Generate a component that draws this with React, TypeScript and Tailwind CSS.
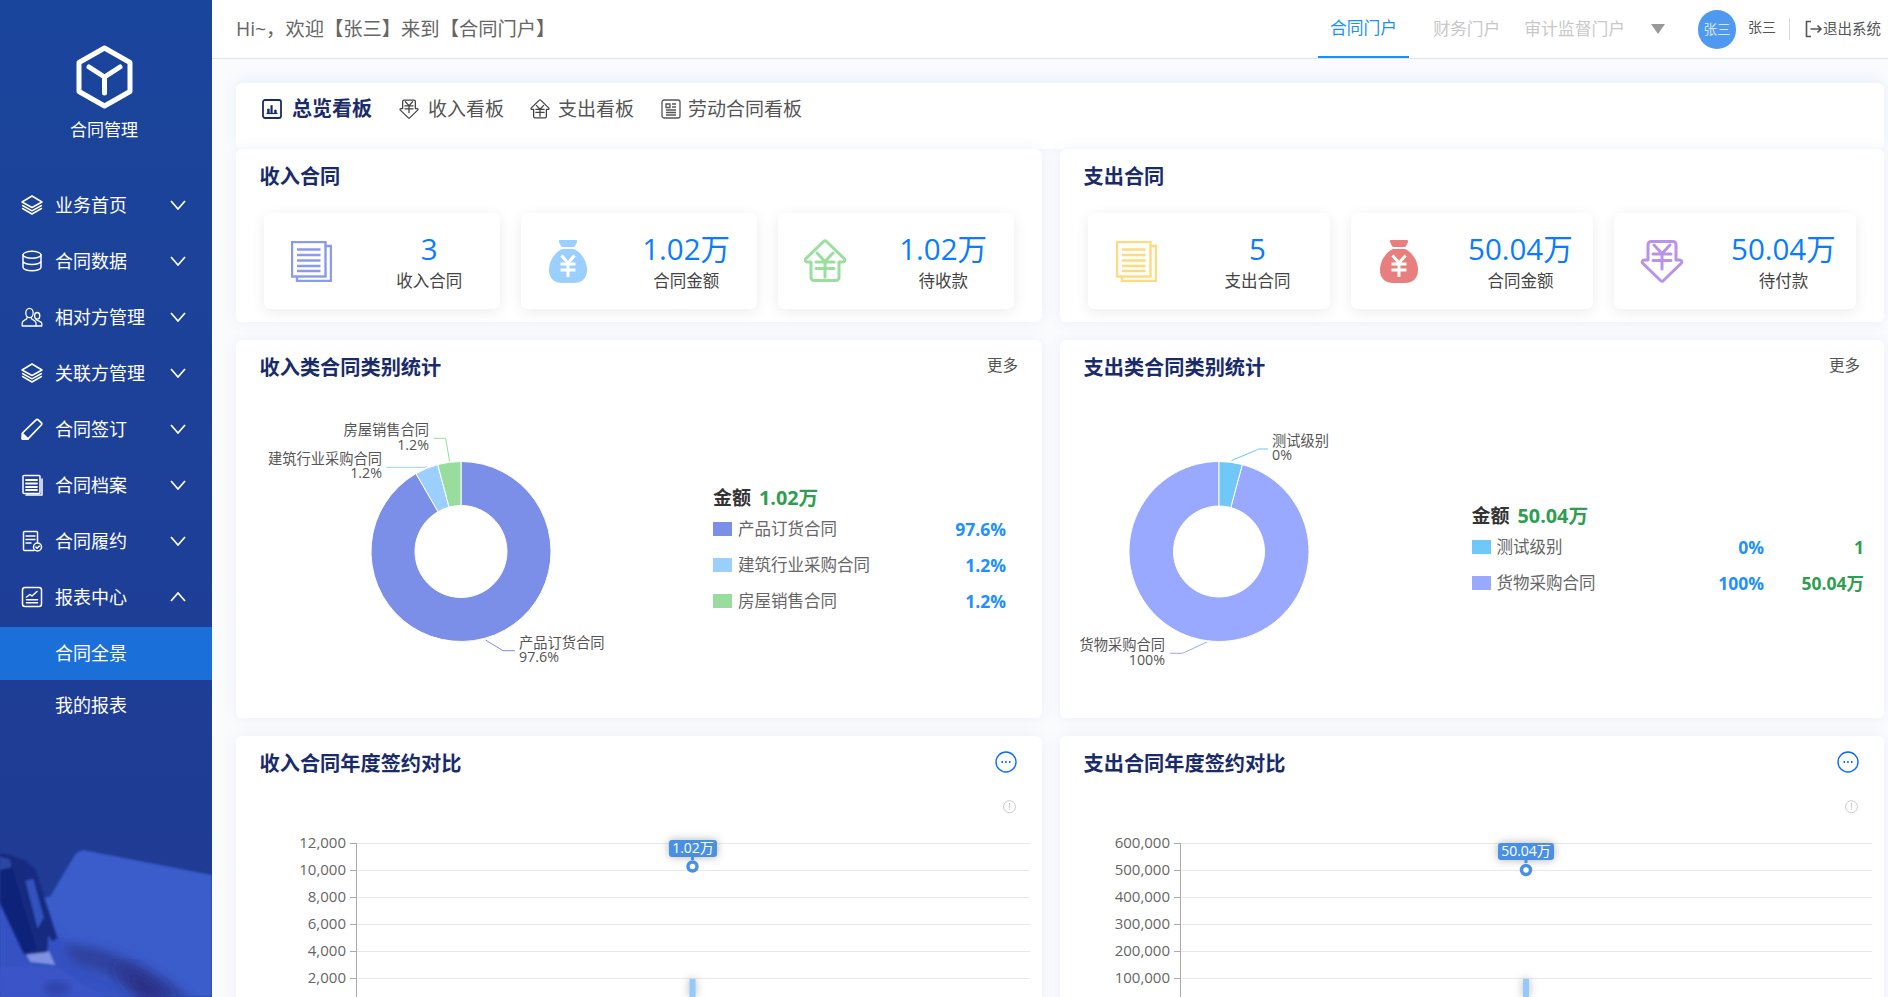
import type { ReactNode } from "react";

const arc = (cx: number, cy: number, r: number, r0: number, a0: number, a1: number) => {
  const p = (rad: number, a: number) => {
    const t = ((a - 90) * Math.PI) / 180;
    return `${(cx + rad * Math.cos(t)).toFixed(2)} ${(cy + rad * Math.sin(t)).toFixed(2)}`;
  };
  const big = a1 - a0 > 180 ? 1 : 0;
  return `M${p(r, a0)} A${r} ${r} 0 ${big} 1 ${p(r, a1)} L${p(r0, a1)} A${r0} ${r0} 0 ${big} 0 ${p(r0, a0)} Z`;
};

const Chevron = ({ up }: { up?: boolean }) => (
  <svg width="16" height="10" viewBox="0 0 16 10" className={up ? "ml-auto rotate-180" : "ml-auto"} fill="none" stroke="#fff" strokeWidth="1.7">
    <path d="M1 1l7 8 7-8" />
  </svg>
);

const ic = { width: 22, height: 22, viewBox: "0 0 22 22", fill: "none", stroke: "#fff", strokeWidth: 1.5, strokeLinejoin: "round" as const, strokeLinecap: "round" as const };

const LayersIcon = () => (
  <svg {...ic}>
    <path d="M11 2l10 6-10 5.500L1 8z" />
    <path d="M1.500 11.500L11 16.800l9.500-5.300M1.500 14.500L11 20l9.500-5.500" />
  </svg>
);
const DbIcon = () => (
  <svg {...ic}>
    <ellipse cx="11" cy="4.800" rx="9" ry="3.500" />
    <path d="M2 4.800v12.400c0 2 4 3.500 9 3.500s9-1.500 9-3.500V4.800M2 11c0 2 4 3.500 9 3.500s9-1.500 9-3.500" />
  </svg>
);
const PeopleIcon = () => (
  <svg {...ic} strokeWidth={1.3}>
    <ellipse cx="8.500" cy="7" rx="3.700" ry="4.700" />
    <path d="M6 11.500c.2 1.300-.6 1.800-2 2.400-1.800.8-2.800 1.700-2.800 3.100v3H15v-3c0-1.400-1-2.300-2.800-3.100-1.400-.6-2.200-1.100-2-2.400" />
    <ellipse cx="16.200" cy="9.800" rx="2.600" ry="3.300" />
    <path d="M15 13c0 .8.500 1.200 1.500 1.500 2.500.8 4.300 1.300 4.300 3v2.500H15" />
  </svg>
);
const PenIcon = () => (
  <svg {...ic} strokeWidth={1.7}>
    <path d="M14.800 2.200c.8-.9 1.700-.9 2.500-.2l2.900 2.600c.8.800.8 1.600.1 2.400L7 20.800l-5.700.2L1.500 15z" />
    <path d="M1.500 15.500l5.500 5.300-5.700.2z" fill="#fff" />
  </svg>
);
const ArchiveIcon = () => (
  <svg {...ic}>
    <rect x="2" y="1.500" width="17" height="18" rx="1" />
    <path d="M5 6h11M5 9.500h11M5 13h11M5 16h11" strokeWidth="1.800" />
    <path d="M21 5v16H5" />
  </svg>
);
const CheckDocIcon = () => (
  <svg {...ic}>
    <path d="M13 20.500H3.500a1 1 0 0 1-1-1v-17a1 1 0 0 1 1-1h12a1 1 0 0 1 1 1V12" />
    <path d="M5 6h9M5 9.500h9M5 13h5" />
    <circle cx="16.500" cy="17" r="4" />
    <path d="M14.800 17l1.300 1.300 2.200-2.300" />
  </svg>
);
const ReportIcon = () => (
  <svg {...ic}>
    <rect x="1.500" y="1.500" width="19" height="19" rx="2.500" />
    <path d="M5.500 11l3.500-2.500 2 1.500 5-4.500M5.500 13.800h11M5.500 16.800h11" />
  </svg>
);

const Doc = ({ color }: { color: string }) => (
  <svg width="41" height="41" viewBox="0 0 41 41" fill="none" stroke={color} strokeWidth="2.400">
    <rect x="1" y="1" width="33.500" height="34.500" fill="#fff" />
    <path d="M34.500 5H40V40H6V35.500" />
    <path d="M6 8.500h23.500M6 14h23.500M6 19.500h23.500M6 25h23.500M6 30h23.500" strokeWidth="2.600" />
  </svg>
);

const Bag = ({ color }: { color: string }) => (
  <svg width="38" height="43" viewBox="0 0 38 43">
    <path fill={color} d="M11 0h16c1 0 1.500 1 1 2l-2 4c-.300.600-1 1-1.600 1H13.600c-.600 0-1.300-.400-1.600-1l-2-4c-.500-1 0-2 1-2z" />
    <path fill={color} d="M13 9h12c7 3 13 12 13 21 0 9-6 13-13 13H13C6 43 0 39 0 30 0 21 6 12 13 9z" />
    <path d="M12.500 15.500l6.500 7.500 6.500-7.500M11.500 24h15M11.500 30h15M19 23v14" fill="none" stroke="#fff" strokeWidth="3" />
  </svg>
);

const UpArrowYen = ({ color, size = 44, sw = 3, down }: { color: string; size?: number; sw?: number; down?: boolean }) => (
  <svg width={size} height={size} viewBox="0 0 44 44" fill="none" stroke={color} strokeWidth={sw} strokeLinejoin="round" strokeLinecap="round">
    <path
      transform={down ? "matrix(1 0 0 -1 0 44)" : undefined}
      d="M20.500 2.500a2.200 2.200 0 0 1 3 0L41 19.500c1.500 1.500.600 3.500-1.500 3.500H36v15.500a3 3 0 0 1-3 3H11a3 3 0 0 1-3-3V23H4.500C2.400 23 1.500 21 3 19.500z"
    />
    <path d={down ? "M14 6l8 8.500L30 6M13 15h18M13 21.500h18M22 14.500V30" : "M14 14l8 8.500L30 14M13 23h18M13 29.500h18M22 22.500V38"} />
  </svg>
);

const menu: { label: string; icon: ReactNode }[] = [
  { label: "业务首页", icon: <LayersIcon /> },
  { label: "合同数据", icon: <DbIcon /> },
  { label: "相对方管理", icon: <PeopleIcon /> },
  { label: "关联方管理", icon: <LayersIcon /> },
  { label: "合同签订", icon: <PenIcon /> },
  { label: "合同档案", icon: <ArchiveIcon /> },
  { label: "合同履约", icon: <CheckDocIcon /> },
];

// photo in the sidebar foot, drawn at 3x of its 212x157 box
const SidebarArt = () => (
  <svg className="absolute bottom-0 left-0" width="212" height="157" viewBox="0 0 636 471">
    <defs>
      <filter id="b12"><feGaussianBlur stdDeviation="14" /></filter>
      <filter id="b20"><feGaussianBlur stdDeviation="22" /></filter>
      <filter id="b2"><feGaussianBlur stdDeviation="2.500" /></filter>
      <clipPath id="box"><rect width="636" height="471" /></clipPath>
    </defs>
    <g clipPath="url(#box)">
      <g filter="url(#b2)">
        <path d="M260 32c-15-3-28 2-36 14L150 170 0 190v281h636V105z" fill="#3a5ccb" />
      </g>
      <path d="M0 200l180 90 40 60 200 121H0z" fill="#3551c2" filter="url(#b12)" />
      <path d="M190 310c70 5 150 20 240 70 60 35 100 60 150 100H420c-60-60-120-90-200-110z" fill="#2f429f" filter="url(#b12)" />
      <path d="M340 370c60 20 120 50 180 110H430c-30-40-60-70-90-110z" fill="#2a2c80" filter="url(#b20)" />
      <path d="M0 382l90-6 90 10 130 85H0z" fill="#3a55c8" filter="url(#b2)" />
      <ellipse cx="170" cy="445" rx="40" ry="22" fill="#2f43a8" filter="url(#b12)" />
      <g filter="url(#b2)">
        <path d="M76 338l72-4 18 42-22-4-54-6z" fill="#7f92e0" />
        <path d="M0 40l40 8 38 16 28 26 66 204-14 10-14-18-2 50-68 8L0 190z" fill="#14297f" />
        <path d="M0 70l34 8 76 250-40 10L0 190z" fill="#0f2079" />
        <path d="M76 122l24-6 31 116-18 34z" fill="#3352bd" />
        <path d="M0 50l30 8 5 24L0 90z" fill="#2c46a4" />
      </g>
    </g>
  </svg>
);

function Sidebar() {
  return (
    <aside className="relative h-full w-[212px] shrink-0 overflow-hidden bg-gradient-to-b from-[#1a459c] to-[#203a93] text-white">
      <SidebarArt />
      <div className="relative">
        <div className="flex h-[177px] flex-col items-center pr-[4px] pt-[45px]">
          <svg width="57" height="64" viewBox="0 0 57 64" fill="none" stroke="#fff" strokeWidth="5" strokeLinejoin="round" strokeLinecap="round">
            <path d="M28.500 3L54 17.500v29L28.500 61 3 46.500v-29z" />
            <path d="M13 22l15.500 10L44 22M28.500 32v16" />
          </svg>
          <div className="mt-[9px] text-[17px] leading-6">合同管理</div>
        </div>
        {menu.map((m) => (
          <div key={m.label} className="flex h-[56px] items-center pl-[21px] pr-[26px] text-[18px]">
            {m.icon}
            <span className="ml-[12px]">{m.label}</span>
            <Chevron />
          </div>
        ))}
        <div className="flex h-[56px] items-center pl-[21px] pr-[26px] text-[18px]">
          <ReportIcon />
          <span className="ml-[12px]">报表中心</span>
          <Chevron up />
        </div>
        <div className="mt-[2px] flex h-[53px] items-center bg-[#1a6fd8] pl-[55px] text-[18px]">合同全景</div>
        <div className="flex h-[50px] items-center pl-[55px] text-[18px]">我的报表</div>
      </div>
    </aside>
  );
}

function Header() {
  return (
    <header className="flex h-[59px] shrink-0 items-center justify-between border-b border-[#e4e4e4] bg-white pl-[24px] pr-[7px]">
      <div className="text-[19.300px] text-[#666]">Hi~，欢迎【张三】来到【合同门户】</div>
      <div className="flex h-full items-center">
        <div className="flex h-full items-center border-b-2 border-[#1890ff] px-3 text-[16.800px] text-[#1890ff]">合同门户</div>
        <div className="ml-[12px] px-3 text-[16.800px] text-[#c8c8c8]">财务门户</div>
        <div className="px-3 text-[16.800px] text-[#c8c8c8]">审计监督门户</div>
        <svg className="ml-[14px]" width="14" height="10" viewBox="0 0 14 10"><path d="M0 0h14L7 10z" fill="#999" /></svg>
        <div className="ml-[33px] flex h-[39px] w-[38px] items-center justify-center rounded-full bg-[#4f9af0] text-[13.500px] text-[#d5e6fb]">张三</div>
        <div className="ml-[12px] pb-[5px] text-[14px] text-[#555]">张三</div>
        <div className="ml-[13px] h-[22px] w-px bg-[#d8d8d8]" />
        <svg className="ml-[15px]" width="18" height="18" viewBox="0 0 18 18" fill="none" stroke="#555" strokeWidth="1.600">
          <path d="M6 1.500H1.500v15H6" />
          <path d="M5.500 9H16M12.500 5.500L16 9l-3.500 3.500" />
        </svg>
        <div className="text-[14.500px] text-[#555]">退出系统</div>
      </div>
    </header>
  );
}

function Tabs() {
  return (
    <div className="flex h-[66px] shrink-0 items-center rounded-md bg-white pb-[14px] pl-[26px] shadow-[0_-4px_14px_rgba(40,110,230,0.08)]">
      <svg width="20" height="20" viewBox="0 0 20 20" fill="none" stroke="#1a2b6b" strokeWidth="1.800">
        <rect x="1" y="1" width="18" height="18" rx="2" />
        <path d="M4.500 14.500h11" strokeWidth="1.200" />
        <path d="M5.500 14V10h1.800v4zM8.800 14V6.500h1.500V14zM12.500 14v-3h1.800v3z" fill="#1a2b6b" strokeWidth="0.600" />
      </svg>
      <span className="ml-[10px] text-[20px] font-bold text-[#1a2b6b]">总览看板</span>
      <span className="ml-[27px]"><UpArrowYen color="#444" size={20} sw={2.800} down /></span>
      <span className="ml-[9px] text-[19px] text-[#555]">收入看板</span>
      <span className="ml-[26px]"><UpArrowYen color="#444" size={20} sw={2.800} /></span>
      <span className="ml-[8px] text-[19px] text-[#555]">支出看板</span>
      <svg className="ml-[27px]" width="20" height="20" viewBox="0 0 20 20" fill="none" stroke="#555" strokeWidth="1.300">
        <rect x="1" y="1" width="18" height="18" rx="2" />
        <path d="M5 5h4v3.500H5zM11 5h4M11 8h4M5 11h10M5 13.500h10M5 16h10" />
      </svg>
      <span className="ml-[7px] text-[19px] text-[#555]">劳动合同看板</span>
    </div>
  );
}

const Card = ({ children, className = "" }: { children: ReactNode; className?: string }) => (
  <section className={`rounded-md bg-white shadow-[0_0_14px_rgba(60,100,190,0.08)] ${className}`}>{children}</section>
);

const CardHead = ({ title, right }: { title: string; right?: ReactNode }) => (
  <div className="flex h-[54px] items-center justify-between pl-[23.500px] pr-[24px]">
    <h2 className="text-[20.200px] font-bold text-[#1a2b6b]">{title}</h2>
    {right}
  </div>
);

const More = () => <span className="-mt-[3px] text-[15.500px] text-[#555]">更多</span>;

const MoreDots = () => (
  <svg width="22" height="22" viewBox="0 0 22 22" className="mr-[1px] -mt-[2px]" fill="none" stroke="#0b6cff" strokeWidth="1.400">
    <circle cx="11" cy="11" r="10" />
    <path d="M6.500 11h1.500M10.200 11h1.500M14 11h1.500" strokeWidth="2" />
  </svg>
);

const Stat = ({ icon, value, label }: { icon: ReactNode; value: string; label: string }) => (
  <div className="flex h-[96px] items-center rounded-md bg-white shadow-[0_3px_14px_rgba(0,0,0,0.08)]">
    <div className="flex w-2/5 justify-center">{icon}</div>
    <div className="flex w-3/5 flex-col items-center pt-[2px]">
      <div className="text-[29.500px] leading-[34px] text-[#0a7cff]">{value}</div>
      <div className="mt-[3px] text-[16.500px] leading-6 text-[#444]">{label}</div>
    </div>
  </div>
);

const Swatch = ({ color }: { color: string }) => <span className="mr-[6px] h-[14px] w-[19px] shrink-0" style={{ background: color }} />;

const Legend = ({ total, rows, width, extra }: { total: string; rows: { c: string; n: string; p: string; v?: string }[]; width: number; extra?: boolean }) => (
  <div className="mt-[3px]" style={{ width }}>
    <div className="mb-px flex items-center font-bold leading-6">
      <span className="text-[19px] text-[#333]">金额</span>
      <span className="ml-[8px] text-[19.800px] text-[#2f9e50]">{total}</span>
    </div>
    {rows.map((r) => (
      <div key={r.n} className="flex h-[36px] items-center text-[16.500px] text-[#666]">
        <Swatch color={r.c} />
        <span>{r.n}</span>
        <span className="ml-auto text-[17.500px] font-bold text-[#1e90ff]">{r.p}</span>
        {extra && <span className="w-[100px] text-right text-[17.500px] font-bold text-[#2f9e50]">{r.v}</span>}
      </div>
    ))}
  </div>
);

const t = { fontSize: 14.25, fill: "#555" };

function IncomePie() {
  return (
    <svg width="477" height="314" viewBox="236 394 477 314" className="shrink-0">
      <path d={arc(461, 551.5, 90, 46, 0, 330)} fill="#7b8ee8" stroke="#fff" />
      <path d={arc(461, 551.5, 90, 46, 330, 345)} fill="#9bcfff" stroke="#fff" />
      <path d={arc(461, 551.5, 90, 46, 345, 360)} fill="#98dd9e" stroke="#fff" />
      <path d="M433.400 438.300h12.200l4 22.700" fill="none" stroke="#98dd9e" />
      <path d="M386.300 467.300h38.700l2-1.300" fill="none" stroke="#9bcfff" />
      <path d="M485.600 640l17.400 10.700h12" fill="none" stroke="#7b8ee8" />
      <text {...t} x="429" y="435" textAnchor="end">房屋销售合同</text>
      <text {...t} x="429" y="450" textAnchor="end">1.2%</text>
      <text {...t} x="382" y="464" textAnchor="end">建筑行业采购合同</text>
      <text {...t} x="382" y="478" textAnchor="end">1.2%</text>
      <text {...t} x="519" y="648">产品订货合同</text>
      <text {...t} x="519" y="662">97.6%</text>
    </svg>
  );
}

function ExpensePie() {
  return (
    <svg width="411.500" height="314" viewBox="1060 394 411.500 314" className="shrink-0">
      <path d={arc(1219, 551.5, 90, 45.5, 15, 360)} fill="#98a9ff" stroke="#fff" />
      <path d={arc(1219, 551.5, 90, 45.5, 0, 15)} fill="#6fc8f8" stroke="#fff" />
      <path d="M1231.400 460.700l27.400-11.700h9.200" fill="none" stroke="#6fc8f8" />
      <path d="M1170 653.300h12.500l24.500-11.300" fill="none" stroke="#98a9ff" />
      <text {...t} x="1272" y="446">测试级别</text>
      <text {...t} x="1272" y="460">0%</text>
      <text {...t} x="1165" y="650" textAnchor="end">货物采购合同</text>
      <text {...t} x="1165" y="665" textAnchor="end">100%</text>
    </svg>
  );
}

const gridY = [843, 870, 897, 924, 951, 978];

function YearChart({ x0, w, axis, end, labels, mx, my, tipX, tipW, tipY, value, info }: {
  x0: number; w: number; axis: number; end: number; labels: string[]; mx: number; my: number; tipX: number; tipW: number; tipY: number; value: string; info: number;
}) {
  return (
    <svg width={w} height="207" viewBox={`${x0} 790 ${w} 207`}>
      <circle cx={info} cy="806.700" r="6" fill="none" stroke="#ccc" />
      <path d={`M${info} 803v4.500M${info} 808.500v1.200`} stroke="#ccc" strokeWidth="1.200" />
      {gridY.map((y, i) => (
        <g key={y}>
          <path d={`M${axis} ${y + 0.5}H${end}`} stroke="#e8e8e8" />
          <path d={`M${axis - 6} ${y + 0.5}H${axis}`} stroke="#aaa" />
          <text x={axis - 10} y={y + 5} textAnchor="end" fontSize="15" fill="#666">{labels[i]}</text>
        </g>
      ))}
      <path d={`M${axis + 0.5} 843V997`} stroke="#aaa" />
      <g className="[filter:drop-shadow(0_0_4px_rgba(0,0,0,0.3))]">
        <rect x={mx - 3} y="979" width="6" height="18" fill="#93c9fb" />
      </g>
      <g className="[filter:drop-shadow(0_0_4px_rgba(0,0,0,0.3))]">
        <rect x={tipX} y={tipY} width={tipW} height="17" rx="3" fill="#4a90e2" />
        <path d={`M${mx - 1.500} ${tipY + 17}h3v3h-3z`} fill="#4a90e2" />
      </g>
      <text x={tipX + tipW / 2} y={tipY + 13} textAnchor="middle" fontSize="14" fill="#fff">{value}</text>
      <circle cx={mx} cy={my} r="4.500" fill="#fff" stroke="#4a90e2" strokeWidth="3.500" />
    </svg>
  );
}

export default function App() {
  return (
    <div className="flex h-[997px] w-[1888px] overflow-hidden bg-white font-['Open_Sans','Noto_Sans_CJK_SC',sans-serif]">
      <Sidebar />
      <main className="flex min-w-0 flex-1 flex-col bg-[#fafbfd]">
        <Header />
        <div className="flex flex-col overflow-hidden pl-[24px] pr-[4px] pt-[24px]">
          <Tabs />
          <div className="grid shrink-0 grid-cols-[806px_824px] gap-[18px]">
            <Card className="h-[173px]">
              <CardHead title="收入合同" />
              <div className="mt-[10px] grid grid-cols-3 gap-[21px] px-[28px]">
                <Stat icon={<Doc color="#8b9bea" />} value="3" label="收入合同" />
                <Stat icon={<Bag color="#9bcfff" />} value="1.02万" label="合同金额" />
                <Stat icon={<UpArrowYen color="#9adf9f" />} value="1.02万" label="待收款" />
              </div>
            </Card>
            <Card className="h-[173px]">
              <CardHead title="支出合同" />
              <div className="mt-[10px] grid grid-cols-3 gap-[21px] px-[28px]">
                <Stat icon={<Doc color="#fedb7f" />} value="5" label="支出合同" />
                <Stat icon={<Bag color="#e87e7e" />} value="50.04万" label="合同金额" />
                <Stat icon={<UpArrowYen color="#b993e8" down />} value="50.04万" label="待付款" />
              </div>
            </Card>
            <Card className="h-[378px]">
              <CardHead title="收入类合同类别统计" right={<More />} />
              <div className="flex items-center">
                <IncomePie />
                <Legend
                  total="1.02万"
                  width={293}
                  rows={[
                    { c: "#7b8ee8", n: "产品订货合同", p: "97.6%" },
                    { c: "#9bcfff", n: "建筑行业采购合同", p: "1.2%" },
                    { c: "#98dd9e", n: "房屋销售合同", p: "1.2%" },
                  ]}
                />
              </div>
            </Card>
            <Card className="h-[378px]">
              <CardHead title="支出类合同类别统计" right={<More />} />
              <div className="flex items-center">
                <ExpensePie />
                <Legend
                  total="50.04万"
                  width={392.5}
                  extra
                  rows={[
                    { c: "#6fc8f8", n: "测试级别", p: "0%", v: "1" },
                    { c: "#98a9ff", n: "货物采购合同", p: "100%", v: "50.04万" },
                  ]}
                />
              </div>
            </Card>
            <Card className="h-[300px]">
              <CardHead title="收入合同年度签约对比" right={<MoreDots />} />
              <YearChart
                x0={236} w={806} axis={356} end={1030}
                labels={["12,000", "10,000", "8,000", "6,000", "4,000", "2,000"]}
                mx={692.5} my={866.5} tipX={669} tipW={48} tipY={840} value="1.02万" info={1009.5}
              />
            </Card>
            <Card className="h-[300px]">
              <CardHead title="支出合同年度签约对比" right={<MoreDots />} />
              <YearChart
                x0={1060} w={824} axis={1180} end={1872}
                labels={["600,000", "500,000", "400,000", "300,000", "200,000", "100,000"]}
                mx={1526} my={870} tipX={1498} tipW={56} tipY={843} value="50.04万" info={1851.5}
              />
            </Card>
          </div>
        </div>
      </main>
    </div>
  );
}
